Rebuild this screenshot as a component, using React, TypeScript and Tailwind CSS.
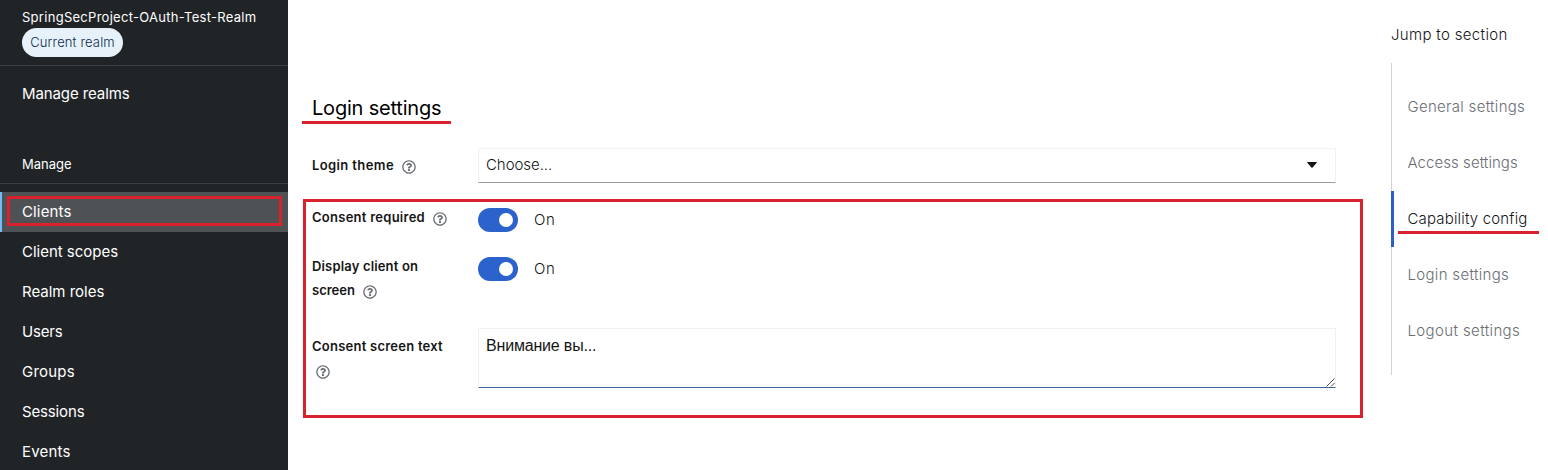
import { FaRegQuestionCircle } from "react-icons/fa";

const navItems = [
  { label: "Client scopes", spacing: "tracking-[-0.02px]" },
  { label: "Realm roles", spacing: "tracking-[-0.01px]" },
  { label: "Users", spacing: "tracking-[-0.2px]" },
  { label: "Groups", spacing: "tracking-[0.2px]" },
  { label: "Sessions", spacing: "tracking-[-0.15px]" },
  { label: "Events", spacing: "tracking-[0.2px]" },
];

const jumpLinks = [
  { label: "General settings", spacing: "tracking-[0.3px]" },
  { label: "Access settings", spacing: "tracking-[0.06px]" },
  { label: "Capability config", spacing: "tracking-[0.16px]", active: true },
  { label: "Login settings", spacing: "tracking-[0.32px]" },
  { label: "Logout settings", spacing: "tracking-[0.38px]" },
];

function Help({ className = "" }: { className?: string }) {
  return <FaRegQuestionCircle className={`size-3.5 shrink-0 text-[#6a6e73] ${className}`} />;
}

function Toggle() {
  return (
    <div className="flex h-6 items-center gap-4">
      <button className="flex h-6 w-10 items-center justify-end rounded-full bg-[#2b62cb] pr-[5px]" aria-label="Toggle">
        <span className="size-3.5 rounded-full bg-white" />
      </button>
      <span className="text-[15px] font-light tracking-[0.6px] text-[#151515]">On</span>
    </div>
  );
}

function Sidebar() {
  return (
    <aside className="flex h-full w-72 shrink-0 flex-col overflow-hidden bg-[#212427] text-[15px] text-white">
      <div className="flex h-[66px] shrink-0 flex-col items-start border-b border-[#3c3f42] pl-[22px] pt-[7px]">
        <span className="text-[13px] leading-5 tracking-[0.28px]">SpringSecProject-OAuth-Test-Realm</span>
        <span className="mt-px flex h-[29px] w-[101px] shrink-0 items-center justify-center rounded-full bg-[#e7f1fa] text-[13px] font-light tracking-[0.15px] text-[#0b2c4d]">
          Current realm
        </span>
      </div>
      <a className="mt-2 flex h-10 shrink-0 items-center pl-[22px] tracking-[-0.1px]">Manage realms</a>
      <div className="mt-[30px] flex h-10 shrink-0 items-center border-b border-[#3c3f42] pl-[22px] pt-[2px] text-[13px]">
        Manage
      </div>
      <nav className="mt-2 flex shrink-0 flex-col">
        <a className="relative flex h-10 shrink-0 items-center border-l-2 border-[#73bcf7] bg-[#4f5255] pl-5 tracking-[0.14px]">
          Clients
          <span className="absolute left-[5px] top-1 h-[30px] w-[275px] border-[3px] border-[#d8232f]" />
        </a>
        {navItems.map((item) => (
          <a key={item.label} className={`flex h-10 shrink-0 items-center pl-[22px] ${item.spacing}`}>
            {item.label}
          </a>
        ))}
      </nav>
    </aside>
  );
}

function LoginSettings() {
  return (
    <main className="relative w-[1103px] shrink-0 pl-6 pt-[92px] text-[13px] text-[#151515]">
      <h2 className="h-8 text-[20px] leading-8 tracking-[-0.2px] text-black">Login settings</h2>
      <div className="mt-6 flex h-[35px]">
        <div className="flex w-[166px] items-start pt-[5px] font-semibold leading-6 tracking-[0.39px]">
          Login theme
          <Help className="ml-2 mt-[7px]" />
        </div>
        <div className="flex w-[858px] items-center justify-between border border-[#f0f0f0] border-b-[#9a9da0] pl-[7px] pr-[18px]">
          <span className="text-[15px] font-light tracking-[-0.05px]">Choose...</span>
          <svg viewBox="0 0 10 6" className="-mt-px h-1.5 w-2.5">
            <path d="M.6 0h8.8q.9.1.3.8L5.6 5.4q-.6.6-1.2 0L.3.8Q-.3.1.6 0Z" fill="#151515" />
          </svg>
        </div>
      </div>
      <div className="mt-[22px] flex h-[49px]">
        <div className="flex w-[166px] items-start font-semibold leading-6 tracking-[0.26px]">
          Consent required
          <Help className="ml-2 mt-[7px]" />
        </div>
        <div className="pt-[3px]">
          <Toggle />
        </div>
      </div>
      <div className="flex h-[74px]">
        <div className="w-[166px] font-semibold leading-6 tracking-[0.16px]">
          <div>Display client on</div>
          <div className="flex tracking-normal">
            screen
            <Help className="ml-2 mt-[7px]" />
          </div>
        </div>
        <div className="pt-[3px]">
          <Toggle />
        </div>
      </div>
      <div className="flex h-[60px]">
        <div className="w-[166px] pt-[6px] font-semibold leading-6 tracking-[0.24px]">
          <div>Consent screen text</div>
          <Help className="ml-1 mt-[7px]" />
        </div>
        <div className="flex w-[858px] items-end justify-between border border-[#f0f0f0] border-b-[#3f6399]">
          <p className="h-full pl-[7px] pt-[5px] font-['Liberation_Sans',sans-serif] text-[16px] leading-6 tracking-[-0.18px]">
            Внимание вы...
          </p>
          <svg viewBox="0 0 9 9" className="size-[9px]" fill="none" stroke="#4a4d50" strokeWidth="1">
            <path d="M.5 8.5l8-8M5 8.5l3.5-3.5" />
          </svg>
        </div>
      </div>
      <span className="absolute left-[14px] top-[121px] h-[3px] w-[149px] bg-[#d8232f]" />
      <span className="absolute left-[15px] top-[199px] h-[219px] w-[1060px] border-[3px] border-[#d8232f]" />
    </main>
  );
}

function JumpLinks() {
  return (
    <aside className="pt-[23px] text-[15px] font-light text-[#151515]">
      <div className="h-10 leading-6 tracking-[0.33px]">Jump to section</div>
      <nav className="flex h-[312px] w-[157px] flex-col border-l border-[#d2d2d2] pt-4">
        {jumpLinks.map((link) => (
          <a
            key={link.label}
            className={`relative flex h-14 items-center pl-[15.5px] ${link.spacing} ${link.active ? "text-[#151515]" : "text-[#6a6e73]"}`}
          >
            {link.label}
            {link.active && (
              <>
                <span className="absolute -left-px top-0 h-14 w-[3px] bg-[#2b5fc4]" />
                <span className="absolute left-1.5 top-10 h-[3px] w-[141px] bg-[#d8232f]" />
              </>
            )}
          </a>
        ))}
      </nav>
    </aside>
  );
}

export default function App() {
  return (
    <div className="flex h-[470px] w-[1548px] overflow-hidden bg-white font-[Inter,sans-serif]">
      <Sidebar />
      <LoginSettings />
      <JumpLinks />
    </div>
  );
}
